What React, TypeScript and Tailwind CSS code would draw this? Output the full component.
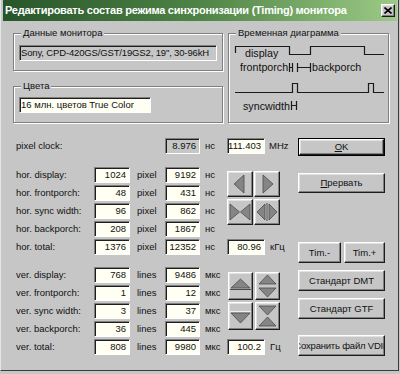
import React from "react";

const RAISED =
  "border border-t-white border-l-white border-b-[#1c1c1c] border-r-[#1c1c1c] shadow-[inset_-1px_-1px_0_#808080,inset_1px_1px_0_#e2e2e2] bg-[#c6c6c6]";

function Field({
  w,
  gray,
  children,
}: {
  w: string;
  gray?: boolean;
  children: React.ReactNode;
}) {
  return (
    <div
      className={`h-[16px] ${w} ${
        gray ? "bg-[#c6c6c6]" : "bg-[#fffff3]"
      } border border-t-[#808080] border-l-[#808080] border-b-white border-r-white shadow-[inset_1px_1px_0_#1e1e1e] flex items-center justify-end pr-[3px] text-[9.5px] leading-none whitespace-nowrap`}
    >
      {children}
    </div>
  );
}

function Row({
  label,
  v1,
  u1,
  v2,
  u2,
}: {
  label: string;
  v1: string;
  u1: string;
  v2: string;
  u2: string;
}) {
  return (
    <div className="flex items-center h-[16px] text-[9.5px] leading-none">
      <div className="w-[78px] whitespace-nowrap">{label}</div>
      <Field w="w-[36px]">{v1}</Field>
      <div className="w-[35px] pl-[7px]">{u1}</div>
      <Field w="w-[35px]">{v2}</Field>
      <div className="w-[27px] pl-[5px]">{u2}</div>
    </div>
  );
}

function Group({
  label,
  className,
  children,
}: {
  label: string;
  className: string;
  children?: React.ReactNode;
}) {
  return (
    <div
      className={`relative border border-[#808080] shadow-[inset_1px_1px_0_#fff,1px_1px_0_#fff] ${className}`}
    >
      <span className="absolute left-[7px] top-[-7px] bg-[#c6c6c6] px-[2px] text-[9.5px] leading-[12px] whitespace-nowrap">
        {label}
      </span>
      {children}
    </div>
  );
}

const TRI = { fill: "#858585", stroke: "#4a4a4a", strokeWidth: 0.8 };

function HIcon({ kind }: { kind: number }) {
  return (
    <svg width="24" height="24" viewBox="0 0 24 24">
      {kind === 0 && <polygon points="6,12 16,3 16,21" {...TRI} />}
      {kind === 1 && <polygon points="18,12 8,3 8,21" {...TRI} />}
      {kind === 2 && (
        <>
          <polygon points="2,4 11.5,12 2,20" {...TRI} />
          <polygon points="22,4 12.5,12 22,20" {...TRI} />
        </>
      )}
      {kind === 3 && (
        <>
          <polygon points="2,12 10,4 10,20" {...TRI} />
          <line x1="12" y1="3" x2="12" y2="21" stroke="#4a4a4a" strokeWidth="1" />
          <polygon points="22,12 14,4 14,20" {...TRI} />
        </>
      )}
    </svg>
  );
}

function VIcon({ kind }: { kind: number }) {
  return (
    <svg width="23" height="26" viewBox="0 0 23 26">
      {kind === 0 && (
        <>
          <polygon points="11.5,6 21,15 2,15" {...TRI} />
          <line x1="1" y1="16.5" x2="22" y2="16.5" stroke="#4a4a4a" strokeWidth="1" />
        </>
      )}
      {kind === 1 && (
        <>
          <polygon points="11.5,2 20,11 3,11" {...TRI} />
          <polygon points="11.5,24 20,15 3,15" {...TRI} />
        </>
      )}
      {kind === 2 && (
        <>
          <line x1="1" y1="8.5" x2="22" y2="8.5" stroke="#f0f0f0" strokeWidth="1" />
          <polygon points="2,10 21,10 11.5,20" {...TRI} />
        </>
      )}
      {kind === 3 && (
        <>
          <polygon points="3,3 20,3 11.5,12" {...TRI} />
          <polygon points="3,23 20,23 11.5,14" {...TRI} />
        </>
      )}
    </svg>
  );
}

function Btn({
  className,
  children,
}: {
  className: string;
  children: React.ReactNode;
}) {
  return (
    <div
      className={`${RAISED} ${className} flex items-center justify-center overflow-hidden whitespace-nowrap text-[9.5px] leading-none`}
    >
      {children}
    </div>
  );
}

export default function App() {
  const hor = [
    ["hor. display:", "1024", "9192"],
    ["hor. frontporch:", "48", "431"],
    ["hor. sync width:", "96", "862"],
    ["hor. backporch:", "208", "1867"],
    ["hor. total:", "1376", "12352"],
  ];
  const ver = [
    ["ver. display:", "768", "9486"],
    ["ver. frontporch:", "1", "12"],
    ["ver. sync width:", "3", "37"],
    ["ver. backporch:", "36", "445"],
    ["ver. total:", "808", "9980"],
  ];
  return (
    <div className="w-[400px] h-[374px] bg-[#c6c6c6] overflow-hidden font-['Liberation_Sans',Arial,sans-serif] text-[#111]">
      <div className="w-[399px] h-[371px] border-l border-l-[#e6e6e6] border-r border-r-[#3a3a3a] border-b border-b-[#3a3a3a] pl-[2px] pr-[1px] flex flex-col">
        {/* title bar */}
        <div className="h-[21px] bg-linear-to-r from-[#27552a] via-[#4f8446] to-[#9ccb86] flex items-center pl-[2px] pr-[2px]">
          <div className="flex-1 min-w-0 text-white font-bold text-[11px] tracking-[-0.25px] leading-none whitespace-nowrap overflow-hidden">
            Редактировать состав режима синхронизации (Timing) монитора
          </div>
          <div className={`${RAISED} shrink-0 w-[14px] h-[13px] flex items-center justify-center`}>
            <svg width="8" height="7" viewBox="0 0 8 7">
              <path d="M0.5 0.5 L7.5 6.5 M7.5 0.5 L0.5 6.5" stroke="#000" strokeWidth="1.6" />
            </svg>
          </div>
        </div>

        {/* body */}
        <div className="flex flex-col pl-[10px] pt-[12px]">
          <div className="flex">
            <div className="w-[210px] flex flex-col">
              <Group label="Данные монитора" className="h-[38px]">
                <div className="ml-[5px] mt-[11px]">
                  <Field w="w-[198px]" gray>
                    <div className="w-full text-left pl-[1px] overflow-hidden tracking-[-0.15px]">
                      Sony, CPD-420GS/GST/19GS2, 19", 30-96kH
                    </div>
                  </Field>
                </div>
              </Group>
              <Group label="Цвета" className="h-[37px] mt-[15px]">
                <div className="ml-[5px] mt-[10px]">
                  <Field w="w-[132px]">
                    <div className="w-full text-left pl-[1px]">16 млн. цветов True Color</div>
                  </Field>
                </div>
              </Group>
            </div>
            <Group label="Временная диаграмма" className="ml-[5px] w-[161px] h-[90px]">
              <svg width="159" height="88" viewBox="229 34 159 88" className="block">
                <g fill="none" stroke="#1a1a1a" strokeWidth="1.2">
                  <path d="M235.5 53 V46.5 H289.5 V54.5 H310.5 V46.5 H364.5 V54.5 H384" />
                  <path d="M235 92.5 H292.5 V83.5 H297.5 V92.5 H368.5 V83.5 H373.5 V92.5 H384" />
                  <path d="M289.5 63 V72 M292.5 63 V72 M289.5 67.5 H292.5" />
                  <path d="M297.5 63 V72 M310.5 63 V72 M297.5 67.5 H310.5" />
                  <path d="M291.5 101 V110 M296.5 101 V110 M291.5 105.5 H296.5" />
                </g>
                <g fontFamily="Liberation Sans, Arial, sans-serif" fontSize="10.7" fill="#111">
                  <text x="245" y="57">display</text>
                  <text x="240" y="71">frontporch</text>
                  <text x="312" y="71">backporch</text>
                  <text x="243" y="110">syncwidth</text>
                </g>
              </svg>
            </Group>
          </div>

          {/* lower */}
          <div className="flex mt-[15px]">
            <div className="ml-[3px] w-[282px] flex flex-col">
              <div className="flex items-center h-[16px] text-[9.5px] leading-none">
                <div className="w-[78px]">pixel clock:</div>
                <div className="w-[71px]" />
                <Field w="w-[35px]" gray>
                  8.976
                </Field>
                <div className="w-[27px] pl-[5px]">нс</div>
                <Field w="w-[38px]">111.403</Field>
                <div className="pl-[4px]">MHz</div>
              </div>

              <div className="flex mt-[13px]">
                <div className="w-[211px] flex flex-col gap-[2px]">
                  {hor.map((r) => (
                    <Row key={r[0]} label={r[0]} v1={r[1]} u1="pixel" v2={r[2]} u2="нс" />
                  ))}
                </div>
                <div className="flex flex-col">
                  <div className="mt-[4px] grid grid-cols-[26px_26px] gap-x-[1px] gap-y-[2px]">
                    {[0, 1, 2, 3].map((k) => (
                      <div key={k} className={`${RAISED} w-[26px] h-[26px] flex items-center justify-center`}>
                        <HIcon kind={k} />
                      </div>
                    ))}
                  </div>
                  <div className="mt-auto flex items-center text-[9.5px] leading-none">
                    <Field w="w-[38px]">80.96</Field>
                    <div className="pl-[5px]">кГц</div>
                  </div>
                </div>
              </div>

              <div className="flex mt-[12px]">
                <div className="w-[211px] flex flex-col gap-[2px]">
                  {ver.map((r) => (
                    <Row key={r[0]} label={r[0]} v1={r[1]} u1="lines" v2={r[2]} u2="мкс" />
                  ))}
                </div>
                <div className="flex flex-col">
                  <div className="mt-[5px] ml-[1px] grid grid-cols-[25px_25px] gap-x-[2px] gap-y-[2px]">
                    {[0, 1, 2, 3].map((k) => (
                      <div key={k} className={`${RAISED} w-[25px] h-[28px] flex items-center justify-center`}>
                        <VIcon kind={k} />
                      </div>
                    ))}
                  </div>
                  <div className="mt-auto flex items-center text-[9.5px] leading-none">
                    <Field w="w-[38px]">100.2</Field>
                    <div className="pl-[5px]">Гц</div>
                  </div>
                </div>
              </div>
            </div>

            {/* buttons */}
            <div className="w-[87px] flex flex-col">
              <div className="h-[18px] border border-black">
                <Btn className="w-full h-full">
                  <span className="underline">O</span>K
                </Btn>
              </div>
              <Btn className="mt-[17px] h-[20px]">
                <span className="underline">П</span>рервать
              </Btn>
              <div className="mt-[49px] flex gap-[3px]">
                <Btn className="w-[43px] h-[21px]">Tim.-</Btn>
                <Btn className="w-[41px] h-[21px]">Tim.+</Btn>
              </div>
              <Btn className="mt-[7px] h-[21px]">Стандарт DMT</Btn>
              <Btn className="mt-[7px] h-[21px]">Стандарт GTF</Btn>
              <Btn className="mt-[16px] h-[21px] tracking-[-0.2px]">Сохранить файл VDIF</Btn>
            </div>
          </div>
        </div>
      </div>
    </div>
  );
}
